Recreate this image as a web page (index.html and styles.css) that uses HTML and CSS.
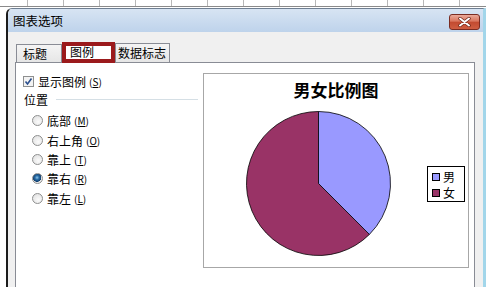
FILE: index.html
```html
<!DOCTYPE html>
<html>
<head>
  <title>图表选项</title>
  <link rel="stylesheet" href="styles.css">
</head>
<body>
  <div class="sheet"></div>

  <div class="dialog">
    <div class="titlebar">
      <span class="title">图表选项</span>
      <button class="close" type="button">
        <svg width="13" height="10" viewBox="0 0 13 10">
          <path d="M2 1.5 L11 8.5 M11 1.5 L2 8.5" stroke="#6b2418" stroke-width="3.4" stroke-linecap="round"/>
          <path d="M2 1.5 L11 8.5 M11 1.5 L2 8.5" stroke="#fff" stroke-width="2" stroke-linecap="round"/>
        </svg>
      </button>
    </div>

    <div class="body">
      <div class="tabs">
        <div class="tab">标题</div>
        <div class="tab tab-on">图例</div>
        <div class="tab tab-wide">数据标志</div>
      </div>

      <div class="panel">
        <div class="options">
          <label class="check-row">
            <svg class="check" width="11" height="11" viewBox="0 0 11 11">
              <rect x="0.5" y="0.5" width="10" height="10" fill="#f3f3f3" stroke="#8e8f8f"/>
              <path d="M2.5 5.5 L4.5 8 L8.5 2.5" fill="none" stroke="#2b4f8e" stroke-width="1.6"/>
            </svg>
            显示图例<span class="key">(<u>S</u>)</span>
          </label>

          <div class="group">
            <span>位置</span>
            <span class="rule"></span>
          </div>

          <div class="radios">
            <label class="radio-row"><span class="radio"></span>底部<span class="key">(<u>M</u>)</span></label>
            <label class="radio-row"><span class="radio"></span>右上角<span class="key">(<u>O</u>)</span></label>
            <label class="radio-row"><span class="radio"></span>靠上<span class="key">(<u>T</u>)</span></label>
            <label class="radio-row"><span class="radio radio-on"></span>靠右<span class="key">(<u>R</u>)</span></label>
            <label class="radio-row"><span class="radio"></span>靠左<span class="key">(<u>L</u>)</span></label>
          </div>
        </div>

        <div class="chart">
          <div class="chart-title">男女比例图</div>
          <div class="chart-row">
            <svg class="pie" width="145" height="145" viewBox="0 0 145 145">
              <path d="M72.5 72.5 L123.41 123.41 A72 72 0 1 1 72.5 0.5 Z" fill="#993366" stroke="#000" stroke-width="0.8"/>
              <path d="M72.5 72.5 L72.5 0.5 A72 72 0 0 1 123.41 123.41 Z" fill="#9999ff" stroke="#000" stroke-width="0.8"/>
            </svg>
            <div class="legend">
              <div class="legend-item"><span class="swatch swatch-m"></span>男</div>
              <div class="legend-item"><span class="swatch swatch-f"></span>女</div>
            </div>
          </div>
        </div>
      </div>
    </div>
  </div>
</body>
</html>
```

FILE: styles.css
```css
body {
  margin: 0;
  width: 486px;
  height: 287px;
  overflow: hidden;
  background: #fff;
  font-family: "Noto Sans CJK SC", "Liberation Sans", sans-serif;
  font-size: 12px;
  color: #000;
}

.sheet {
  height: 6px;
  border-bottom: 1px solid #8a8a8a;
  background-image: repeating-linear-gradient(90deg, transparent 0 35px, #b8b8b8 35px 36px);
  background-position: -8px 0;
}

.dialog {
  margin-top: 1px;
  margin-left: 6px;
  height: 280px;
  border-left: 2px solid #1c1c1c;
  border-right: 3px solid #a2d6ea;
  border-top: 1px solid #6f7f92;
  border-top-left-radius: 6px;
  display: flex;
  flex-direction: column;
}

.titlebar {
  height: 23px;
  display: flex;
  align-items: center;
  justify-content: space-between;
  padding: 0 3px 0 5px;
  background: linear-gradient(#d7e4f3, #bed3eb);
  border-top-left-radius: 5px;
}

.title {
  font-size: 12.5px;
  line-height: 14px;
}

.close {
  width: 31px;
  height: 16px;
  margin-top: 2px;
  padding: 0;
  border: 1px solid #7a2c22;
  border-radius: 3px;
  background: linear-gradient(#eaa999, #d9745c 45%, #c24a30 50%, #cf5d41);
  display: flex;
  align-items: center;
  justify-content: center;
}

.body {
  flex: 1;
  background: #f0f0f0;
  padding: 10px 8px 0 7px;
  display: flex;
  flex-direction: column;
}

.tabs {
  height: 20px;
  display: flex;
  align-items: flex-end;
  padding-left: 1px;
}

.tab {
  box-sizing: border-box;
  width: 46px;
  height: 18px;
  border: 1px solid #898c95;
  border-bottom: none;
  background: linear-gradient(#f4f4f4, #e6e6e6);
  padding-left: 6px;
  line-height: 17px;
}

.tab-on {
  position: relative;
  z-index: 1;
  width: 53px;
  height: 21px;
  margin-bottom: -1px;
  border: 4px solid #9b1a1c;
  background: #fff;
  padding-left: 4px;
  line-height: 11px;
}

.tab-wide {
  width: 55px;
  height: 19px;
  padding-left: 2px;
  line-height: 18px;
}

.panel {
  flex: 1;
  border: 1px solid #898c95;
  border-bottom: none;
  background: #fff;
  display: flex;
  align-items: flex-start;
}

.options {
  width: 174px;
  padding: 10px 0 0 8px;
}

.check-row {
  height: 16px;
  display: flex;
  align-items: center;
  margin-left: -1px;
}

.check {
  margin-right: 4px;
}

.key {
  font-size: 10px;
  margin-left: 3px;
}

.group {
  height: 18px;
  display: flex;
  align-items: center;
  margin-top: 1px;
}

.rule {
  flex: 1;
  margin-left: 8px;
  border-top: 1px solid #d5dfe5;
}

.radios {
  padding: 3px 0 0 8px;
}

.radio-row {
  height: 19.4px;
  display: flex;
  align-items: center;
}

.radio {
  box-sizing: border-box;
  width: 11px;
  height: 11px;
  border: 1px solid #8e8f8f;
  border-radius: 50%;
  background: radial-gradient(circle at 60% 65%, #fbfbfb, #dcdcdc);
  margin-right: 4px;
}

.radio-on {
  background: radial-gradient(circle at 45% 40%, #8ec6ea 0, #2a6ea8 2px, #123f6e 4px, #e6e6e6 4.4px, #fbfbfb);
}

.chart {
  box-sizing: border-box;
  width: 266px;
  height: 195px;
  margin-top: 10px;
  margin-left: 5px;
  border: 1px solid #a7a7a7;
}

.chart-title {
  text-align: center;
  font-size: 17px;
  font-weight: bold;
  line-height: 31px;
  height: 37px;
}

.chart-row {
  display: flex;
  align-items: center;
  padding-left: 42px;
}

.legend {
  box-sizing: border-box;
  width: 38px;
  height: 36px;
  margin-left: 36px;
  border: 1px solid #000;
  padding: 2px 0 0 4px;
}

.legend-item {
  height: 16px;
  display: flex;
  align-items: center;
  font-size: 12px;
}

.swatch {
  box-sizing: border-box;
  width: 8px;
  height: 8px;
  border: 1px solid #000;
  margin-right: 3px;
}

.swatch-m {
  background: #9999ff;
}

.swatch-f {
  background: #993366;
}
```
